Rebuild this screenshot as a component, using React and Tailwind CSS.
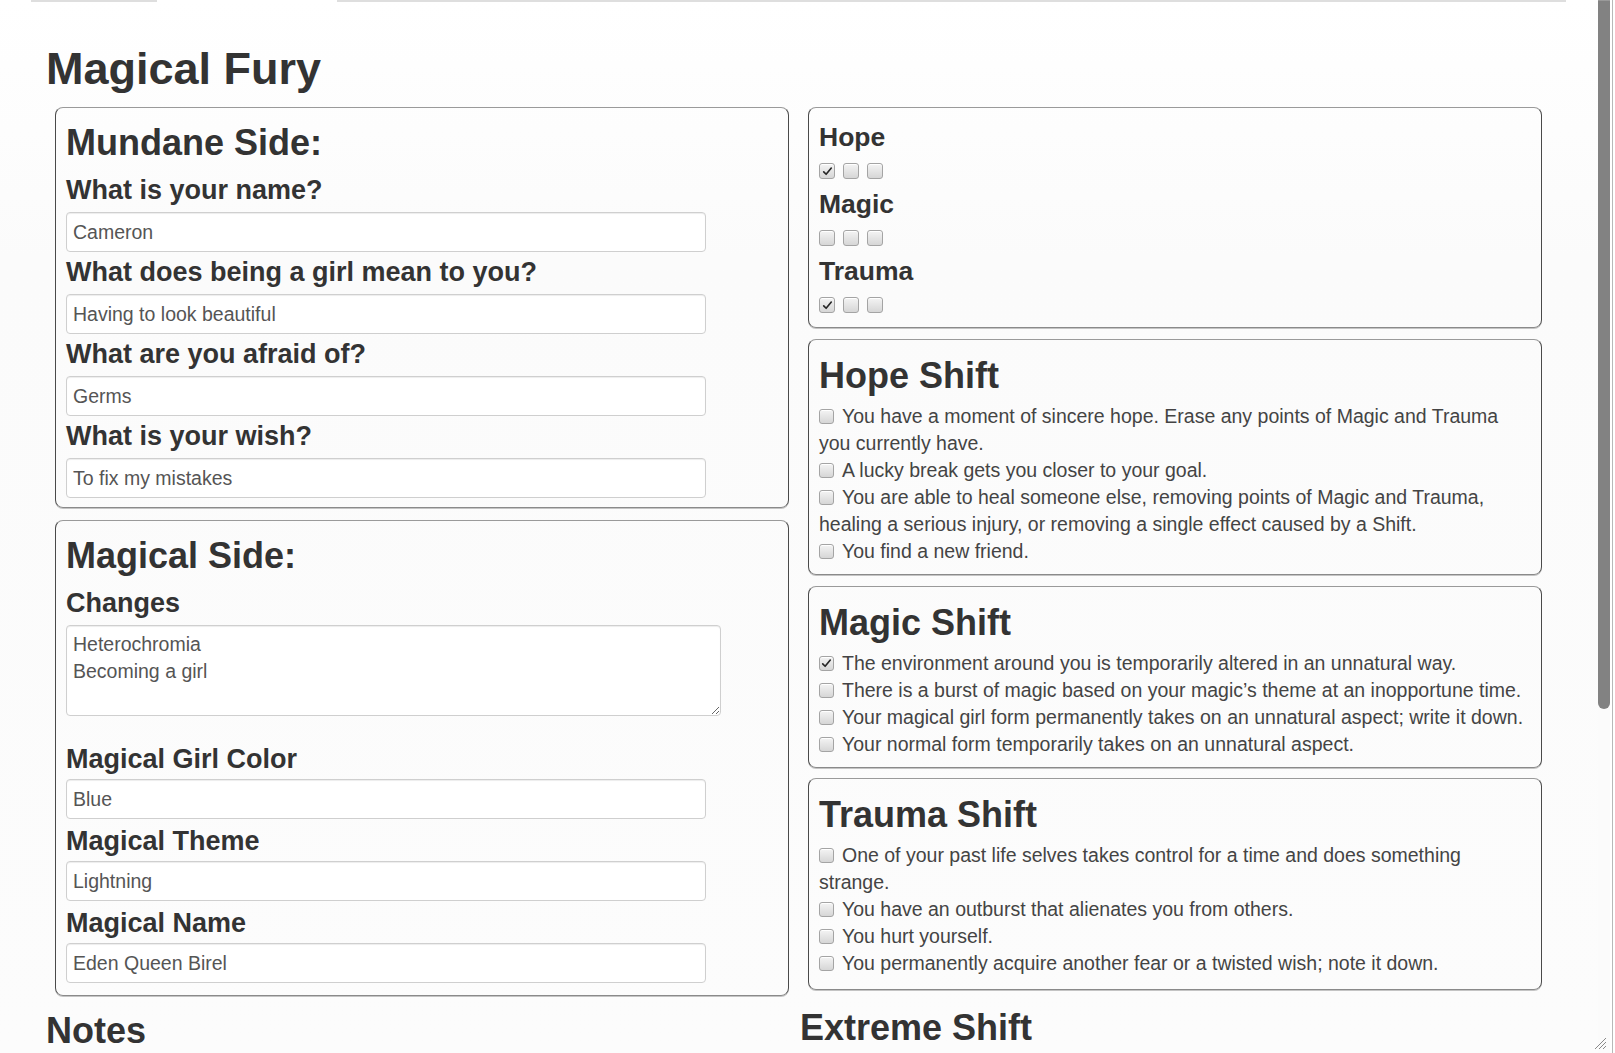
import React from "react";

const mundane = [
  { label: "What is your name?", value: "Cameron" },
  { label: "What does being a girl mean to you?", value: "Having to look beautiful" },
  { label: "What are you afraid of?", value: "Germs" },
  { label: "What is your wish?", value: "To fix my mistakes" },
];

const magical = [
  { label: "Magical Girl Color", value: "Blue" },
  { label: "Magical Theme", value: "Lightning" },
  { label: "Magical Name", value: "Eden Queen Birel" },
];

const tracks = [
  { name: "Hope", marks: [true, false, false] },
  { name: "Magic", marks: [false, false, false] },
  { name: "Trauma", marks: [true, false, false] },
];

const shifts = [
  {
    title: "Hope Shift",
    items: [
      { text: "You have a moment of sincere hope. Erase any points of Magic and Trauma you currently have." },
      { text: "A lucky break gets you closer to your goal." },
      { text: "You are able to heal someone else, removing points of Magic and Trauma, healing a serious injury, or removing a single effect caused by a Shift." },
      { text: "You find a new friend." },
    ],
  },
  {
    title: "Magic Shift",
    items: [
      { text: "The environment around you is temporarily altered in an unnatural way.", checked: true },
      { text: "There is a burst of magic based on your magic\u2019s theme at an inopportune time." },
      { text: "Your magical girl form permanently takes on an unnatural aspect; write it down." },
      { text: "Your normal form temporarily takes on an unnatural aspect." },
    ],
  },
  {
    title: "Trauma Shift",
    items: [
      { text: "One of your past life selves takes control for a time and does something strange." },
      { text: "You have an outburst that alienates you from others." },
      { text: "You hurt yourself." },
      { text: "You permanently acquire another fear or a twisted wish; note it down." },
    ],
  },
];

function Box({ checked, size = "w-[15px] h-[15px]", className = "" }) {
  return (
    <span
      className={
        "inline-flex items-center justify-center rounded-[3px] border border-[#a4a4a4] bg-linear-to-b from-[#f4f4f4] to-[#d6d6d6] shadow-[inset_0_1px_0_#ffffff] " +
        size +
        " " +
        className
      }
    >
      {checked && (
        <svg viewBox="0 0 16 16" className="w-[11px] h-[11px]">
          <path d="M2.5 8.5 L6 12 L13.5 3" fill="none" stroke="#262626" strokeWidth="2.4" strokeLinecap="round" strokeLinejoin="round" />
        </svg>
      )}
    </span>
  );
}

function Panel({ className = "", children }) {
  return (
    <div
      className={
        "rounded-[8px] border border-x-[#4a4a4a] border-t-[#9a9a9a] border-b-[#8a8a8a] shadow-[0_1px_0_#c4c4c4] px-[10px] " +
        className
      }
    >
      {children}
    </div>
  );
}

// label + text box; the magical side sits its boxes a little closer to the label
function Field({ label, value, first, tight }) {
  return (
    <div className={first ? "mt-[12px]" : tight ? "mt-[7px]" : "mt-[5px]"}>
      <h3 className="text-[27px] leading-[30px] font-bold text-[#333]">{label}</h3>
      <input
        type="text"
        defaultValue={value}
        className={
          (tight ? "mt-[5px] " : "mt-[7px] ") +
          "block w-[640px] h-[40px] px-[6px] rounded-[4px] border border-[#cfcfcf] bg-white text-[19.5px] text-[#555] shadow-[inset_0_1px_1px_rgba(0,0,0,0.075)] outline-none"
        }
      />
    </div>
  );
}

export default function App() {
  return (
    <div className="relative flex h-[1053px] w-[1615px] overflow-hidden font-['Liberation_Sans',Arial,sans-serif] text-[#333] bg-[linear-gradient(to_bottom,#ffffff,#fbfbfb_260px,#fcfcfc)]">
      <main className="w-[1598px] shrink-0">
        <div className="flex h-[2px]">
          <div className="w-[31px]" />
          <div className="w-[126px] bg-[#dedede]" />
          <div className="w-[180px]" />
          <div className="w-[1229px] bg-[#dedede]" />
        </div>

        <div className="pl-[46px] pt-[42px]">
          <h1 className="text-[45px] leading-[50px] font-bold text-[#333]">Magical Fury</h1>

          <div className="mt-[13px] flex">
            {/* left column */}
            <div className="w-[754px]">
              <Panel className="ml-[9px] w-[734px] pt-[15px] pb-[9px]">
                <h2 className="text-[36px] leading-[40px] font-bold">Mundane Side:</h2>
                {mundane.map((f, i) => (
                  <Field key={f.label} label={f.label} value={f.value} first={i === 0} />
                ))}
              </Panel>

              <Panel className="ml-[9px] mt-[12px] w-[734px] pt-[15px] pb-[12px]">
                <h2 className="text-[36px] leading-[40px] font-bold">Magical Side:</h2>
                <h3 className="mt-[12px] text-[27px] leading-[30px] font-bold">Changes</h3>
                <textarea
                  defaultValue={"Heterochromia\nBecoming a girl"}
                  className="mt-[7px] block w-[655px] h-[91px] px-[6px] pt-[5px] rounded-[4px] border border-[#cfcfcf] bg-white text-[19.5px] leading-[27px] text-[#555] shadow-[inset_0_1px_1px_rgba(0,0,0,0.075)] outline-none"
                />
                <div className="mt-[28px]">
                  {magical.map((f) => (
                    <Field key={f.label} label={f.label} value={f.value} tight />
                  ))}
                </div>
              </Panel>

              <h2 className="mt-[15px] text-[36px] leading-[40px] font-bold">Notes</h2>
            </div>

            {/* right column */}
            <div className="w-[754px]">
              <Panel className="ml-[8px] w-[734px] pt-[14px] pb-[14px]">
                {tracks.map((t, i) => (
                  <div key={t.name} className={i === 0 ? "" : "mt-[10px]"}>
                    <h3 className="text-[26.5px] leading-[30px] font-bold">{t.name}</h3>
                    <div className="mt-[11px] flex gap-[8px]">
                      {t.marks.map((m, j) => (
                        <Box key={j} checked={m} size="w-[16px] h-[16px]" />
                      ))}
                    </div>
                  </div>
                ))}
              </Panel>

              {shifts.map((s, i) => (
                <Panel
                  key={s.title}
                  className={
                    "ml-[8px] w-[734px] pt-[16px] " +
                    (i === 0 ? "mt-[11px] pb-[9px]" : i === 1 ? "mt-[11px] pb-[9px]" : "mt-[10px] pb-[12px]")
                  }
                >
                  <h2 className="text-[36px] leading-[40px] font-bold">{s.title}</h2>
                  <div className="mt-[7px] text-[19.5px] leading-[27px] text-[#444]">
                    {s.items.map((it) => (
                      <div key={it.text}>
                        <Box checked={it.checked} className="mr-[8px] align-middle relative -top-[1px]" />
                        {it.text}
                      </div>
                    ))}
                  </div>
                </Panel>
              ))}

              <h2 className="mt-[18px] text-[36px] leading-[40px] font-bold">Extreme Shift</h2>
            </div>
          </div>
        </div>
      </main>

      {/* frame scrollbar */}
      <div className="w-[12px] shrink-0 bg-[#fbfbfb]">
        <div className="h-[709px] rounded-b-[6px] bg-[#828282] border-t border-[#9a9a9a]" />
      </div>
      <div className="w-[2px] shrink-0 bg-white" />
      <div className="w-[1px] shrink-0 bg-[#b8b8b8]" />
      <div className="w-[2px] shrink-0 bg-white" />

      <svg viewBox="0 0 15 15" className="absolute right-[8px] bottom-[3px] w-[15px] h-[15px]">
        <path d="M14 3 L3 14 M14 7 L7 14 M14 11 L11 14" stroke="#8a8a8a" strokeWidth="1" fill="none" />
      </svg>
    </div>
  );
}
